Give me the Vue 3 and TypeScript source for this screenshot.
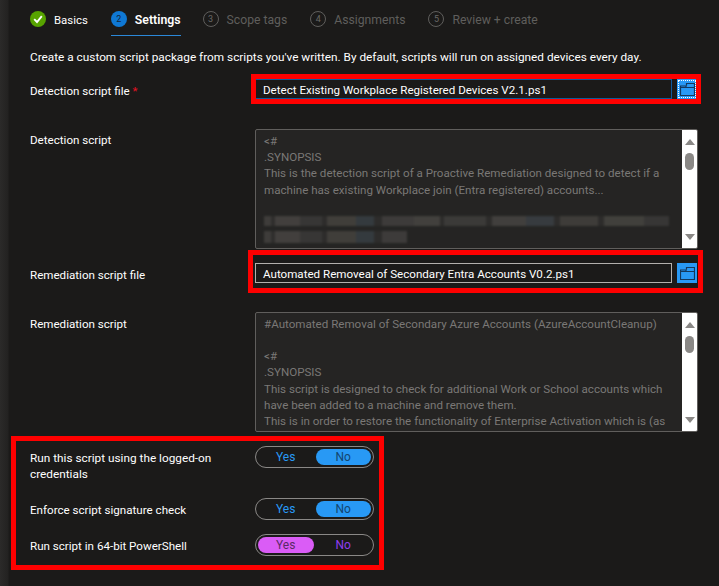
<script setup lang="ts">
const tabs = [
  { n: '✓', label: 'Basics', state: 'done' },
  { n: '2', label: 'Settings', state: 'active' },
  { n: '3', label: 'Scope tags', state: 'off' },
  { n: '4', label: 'Assignments', state: 'off' },
  { n: '5', label: 'Review + create', state: 'off' },
]
const toggles = [
  { label: 'Run this script using the logged-on credentials', on: 'no', cls: 'two' },
  { label: 'Enforce script signature check', on: 'no', cls: 'one' },
  { label: 'Run script in 64-bit PowerShell', on: 'yes', cls: 'one' },
]
const script1 = [
  '.SYNOPSIS',
  'This is the detection script of a Proactive Remediation designed to detect if a',
  'machine has existing Workplace join (Entra registered) accounts...',
]
const script2 = [
  '.SYNOPSIS',
  'This script is designed to check for additional Work or School accounts which',
  'have been added to a machine and remove them.',
  'This is in order to restore the functionality of Enterprise Activation which is (as',
]
</script>

<template>
  <div class="page">
    <nav class="tabs">
      <div v-for="t in tabs" :key="t.label" class="tab" :class="t.state">
        <span class="badge">
          <svg v-if="t.state === 'done'" width="10" height="10" viewBox="0 0 10 10"><path d="M1.2 5.2 4 8 8.8 2.2" fill="none" stroke="#fff" stroke-width="1.9" /></svg>
          <template v-else>{{ t.n }}</template>
        </span>
        <span class="tab-label">{{ t.label }}</span>
      </div>
    </nav>

    <p class="intro">Create a custom script package from scripts you've written. By default, scripts will run on assigned devices every day.</p>

    <div class="row file first">
      <label>Detection script file <em>*</em></label>
      <div class="file-field">
        <div class="input focused">Detect Existing Workplace Registered Devices V2.1.ps1</div>
        <button class="browse focus">
          <svg width="15" height="13" viewBox="0 0 15 13"><path d="M.5 4.5h14v8H.5zM.5 4.5V3h5.5v1.5M6.5 2.5V.5h8v4" fill="none" stroke="#14385c" stroke-width="1.2" /></svg>
        </button>
      </div>
    </div>

    <div class="row script s1">
      <label>Detection script</label>
      <div class="textarea">
        <div class="ta-text">
          <div>&lt;#</div>
          <div v-for="l in script1" :key="l">{{ l }}</div>
          <div class="blank"></div>
          <div class="smudge w1"></div>
          <div class="smudge w2"></div>
        </div>
        <div class="scroll">
          <i class="up"></i><i class="thumb"></i><i class="down"></i>
        </div>
      </div>
    </div>

    <div class="row file second">
      <label>Remediation script file</label>
      <div class="file-field">
        <div class="input plain">Automated Removeal of Secondary Entra Accounts V0.2.ps1</div>
        <button class="browse">
          <svg width="15" height="13" viewBox="0 0 15 13"><path d="M.5 4.5h14v8H.5zM.5 4.5V3h5.5v1.5M6.5 2.5V.5h8v4" fill="none" stroke="#14385c" stroke-width="1.2" /></svg>
        </button>
      </div>
    </div>

    <div class="row script s2">
      <label>Remediation script</label>
      <div class="textarea">
        <div class="ta-text">
          <div>#Automated Removal of Secondary Azure Accounts (AzureAccountCleanup)</div>
          <div class="blank"></div>
          <div>&lt;#</div>
          <div v-for="l in script2" :key="l">{{ l }}</div>
        </div>
        <div class="scroll">
          <i class="up"></i><i class="thumb"></i><i class="down"></i>
        </div>
      </div>
    </div>

    <div v-for="t in toggles" :key="t.label" class="row toggle-row" :class="t.cls">
      <label>{{ t.label }}</label>
      <div class="toggle" :class="t.on">
        <span class="opt yes">Yes</span>
        <span class="opt no">No</span>
      </div>
    </div>

    <div class="mark m1"></div>
    <div class="mark m2"></div>
    <div class="mark m3"></div>
  </div>
</template>

<style>
html, body { margin: 0; background: #1b1a19; }
</style>

<style scoped>
.page {
  position: relative;
  width: 719px;
  height: 586px;
  overflow: hidden;
  box-sizing: border-box;
  padding: 0 21px 0 30px;
  background: linear-gradient(90deg, #2b2a29 0, #232221 8px, #1b1a19 9px);
  color: #fff;
  font: 11.6px/16px Roboto, "Open Sans", sans-serif;
}
.tabs { display: flex; height: 36px; padding-top: 11px; box-sizing: border-box; }
.tab { display: flex; align-items: flex-start; height: 25px; margin-right: 23px; box-sizing: border-box; }
.tab-label { margin-left: 8px; padding-top: 1px; white-space: nowrap; }
.badge {
  width: 16px; height: 16px; border-radius: 50%; box-sizing: border-box; flex: none;
  display: flex; align-items: center; justify-content: center;
  font-size: 9px; line-height: 16px;
}
.done { font-size: 11.4px; }
.done .badge { background: #57a300; }
.active { border-bottom: 1px solid #2b88d8; font-weight: 600; font-size: 12.3px; margin-right: 22px; }
.active .badge { background: #0f78d4; color: #12243a; font-weight: 400; }
.off { color: #5f5e5c; font-size: 12.2px; }
.off .badge { border: 1px solid #5f5e5c; color: #6a6967; }
.intro { margin: 13px 0 0; height: 16px; white-space: nowrap; font-size: 11.8px; }
.row { display: grid; grid-template-columns: 225px 443px; }
.row label { display: block; padding-top: 4px; }
.row label em { color: #e81123; font-style: normal; }
.first { margin-top: 14px; height: 20px; }
.file-field { display: flex; gap: 5px; height: 20px; }
.input { width: 417px; height: 20px; box-sizing: border-box; padding-left: 7px; line-height: 20px; white-space: nowrap; color: #fff; background: #1b1a19; }
.focused { border: 1px solid #0f5a9c; }
.plain { border: 1px solid #b3b0ad; }
.browse { width: 20px; height: 20px; padding: 0; border: 0; background: #2899f5; display: flex; align-items: center; justify-content: center; box-sizing: border-box; }
.browse.focus { outline: 1px dotted #fff; outline-offset: -2px; }
.script { height: 120px; }
.s1 { margin-top: 30px; }
.s2 { margin-top: 29px; }
.s1 label { padding-top: 3px; }
.textarea { display: flex; border: 1px solid #605e5c; border-radius: 2px; background: #252423; height: 120px; box-sizing: border-box; overflow: hidden; }
.ta-text { flex: 1; min-width: 0; padding: 3px 8px 0; color: #7a7876; overflow: hidden; white-space: nowrap; line-height: 16.2px; }
.blank { height: 16px; }
.smudge {
  height: 10px;
  filter: blur(1.2px);
  background: linear-gradient(90deg, #3e3c3a 0 7px, #2f2e2d 7px 11px, #423f3d 11px 36px, #373635 36px 58px, #2d2c2b 58px 63px, #403e3a 63px 92px, #343a3e 92px 110px, #2d2c2b 110px 118px, #3d3b3a 118px 150px, #42403d 150px 176px, #2d2c2b 176px 180px, #3b3a38 180px 222px, #2d2c2b 222px 228px, #413f3d 228px 262px, #373b3f 262px 290px, #2d2c2b 290px 296px, #3e3c39 296px 334px, #2d2c2b 334px 340px, #41403c 340px 380px, #373635 380px 405px);
}
.w1 { width: 405px; margin-top: 2px; }
.w2 { width: 143px; height: 12px; margin-top: 5px; }
.scroll { width: 15px; flex: none; background: #fff; display: flex; flex-direction: column; align-items: center; position: relative; }
.up, .down { width: 0; height: 0; border-left: 5px solid transparent; border-right: 5px solid transparent; position: absolute; }
.up { top: 9px; border-bottom: 6px solid #8a8886; }
.down { bottom: 8px; border-top: 6px solid #8a8886; }
.thumb { position: absolute; top: 23px; width: 9px; height: 17px; border-radius: 5px; background: #8a8886; }
.second { margin-top: 14px; height: 20px; }
.toggle-row label { padding-right: 20px; padding-top: 4px; }
.two { margin-top: 14px; height: 52px; }
.two label { font-size: 11.8px; }
.one { height: 36px; }
.toggle { width: 119px; height: 22px; box-sizing: border-box; border: 1px solid #8a8886; border-radius: 11px; padding: 2px; display: grid; grid-template-columns: 1fr 1fr; column-gap: 2px; text-align: center; line-height: 16px; font-size: 12px; }
.opt { border-radius: 8px; height: 16px; }
.toggle.no .yes { color: #2899f5; }
.toggle.no .no { background: #2899f5; color: #13456f; }
.toggle.yes .yes { background: #da5cf6; color: #5a2a66; }
.toggle.yes .no { color: #8f3df0; }
.mark { position: absolute; border: 5px solid #fe0000; box-sizing: border-box; pointer-events: none; }
.m1 { left: 251px; top: 74px; width: 450px; height: 30px; }
.m2 { left: 248px; top: 250px; width: 455px; height: 43px; }
.m3 { left: 11px; top: 436px; width: 373px; height: 134px; }
</style>
